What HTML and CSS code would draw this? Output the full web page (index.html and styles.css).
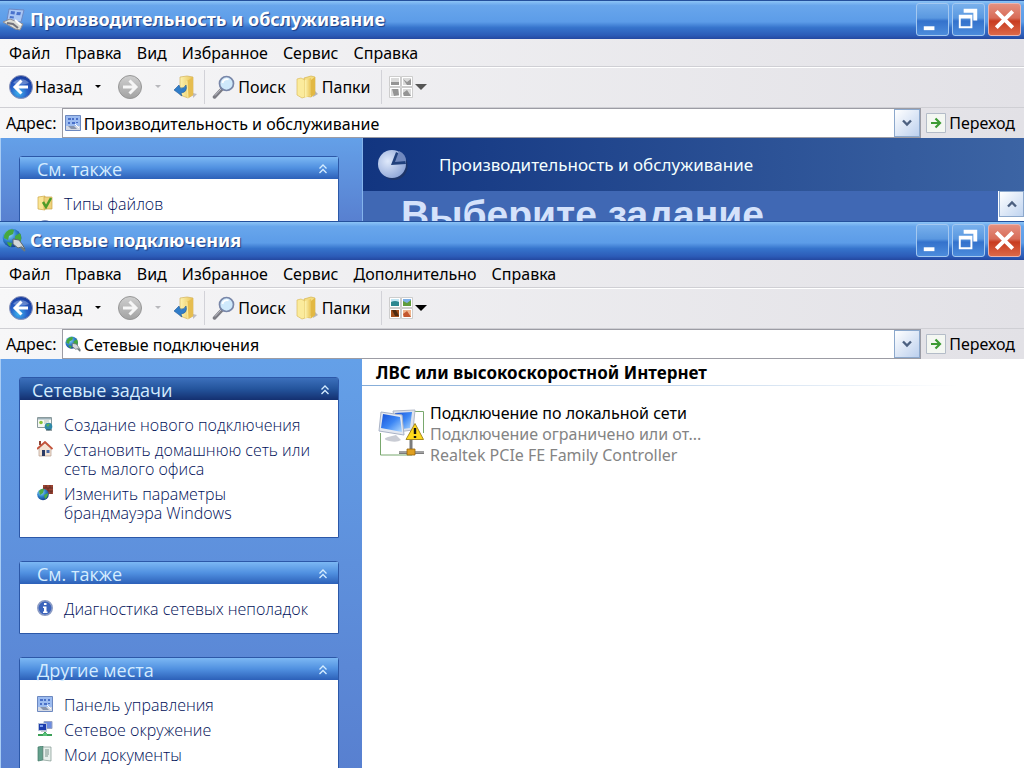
FILE: index.html
```
<!DOCTYPE html>
<html lang="ru">
<head>
  <meta charset="UTF-8">
  <title>Сетевые подключения</title>
  <link rel="stylesheet" href="styles.css">
</head>
<body>

  <svg class="sprite" aria-hidden="true">
    <defs>
      <radialGradient id="gBack" cx="40%" cy="75%" r="75%">
        <stop offset="0" stop-color="#3fb4ee"/><stop offset="0.5" stop-color="#2860c8"/><stop offset="1" stop-color="#173a9c"/>
      </radialGradient>
      <linearGradient id="gGray" x1="0" y1="0" x2="0" y2="1">
        <stop offset="0" stop-color="#cfcfcf"/><stop offset="1" stop-color="#a2a2a2"/>
      </linearGradient>
      <linearGradient id="gFolder" x1="0" y1="0" x2="1" y2="0">
        <stop offset="0" stop-color="#fdf3b0"/><stop offset="1" stop-color="#e9c355"/>
      </linearGradient>
      <linearGradient id="gScreen" x1="0" y1="0" x2="1" y2="1">
        <stop offset="0" stop-color="#1550d8"/><stop offset="0.5" stop-color="#3c86f4"/><stop offset="1" stop-color="#b4dcff"/>
      </linearGradient>
      <radialGradient id="gGlobe" cx="35%" cy="30%" r="75%">
        <stop offset="0" stop-color="#9fe0fb"/><stop offset="0.5" stop-color="#2f84cc"/><stop offset="1" stop-color="#123a86"/>
      </radialGradient>
      <radialGradient id="gPie" cx="35%" cy="40%" r="70%">
        <stop offset="0" stop-color="#dfe9fb"/><stop offset="1" stop-color="#8ca4d6"/>
      </radialGradient>
    </defs>

    <symbol id="back" viewBox="0 0 24 24">
      <circle cx="12" cy="12" r="11.5" fill="url(#gBack)" stroke="#8a93b8"/>
      <path d="M4 8a9 7 0 0 1 16 0q-8 3-16 0z" fill="#fff" opacity=".3"/>
      <path d="M12.500 5.500L6 12l6.500 6.500M6.500 12H19" fill="none" stroke="#fff" stroke-width="3"/>
    </symbol>
    <symbol id="forward" viewBox="0 0 24 24">
      <circle cx="12" cy="12" r="11.500" fill="url(#gGray)" stroke="#979797"/>
      <path d="M11.500 5.500L18 12l-6.500 6.500M5 12h12.500" fill="none" stroke="#f6f6f6" stroke-width="3"/>
    </symbol>
    <symbol id="up" viewBox="0 0 24 24">
      <path d="M20 18l4 1-4 4z" fill="#bcbcc4"/>
      <path d="M7 2l7-1 6 1v18l-5 3-8-3z" fill="url(#gFolder)" stroke="#d2b25c" stroke-width=".7"/>
      <path d="M14 6l6-4v18l-5 3z" fill="#e6bd50"/>
      <path d="M14 6l1 17" stroke="#fdf3b0" stroke-width=".8"/>
      <path d="M1 15l5-5 1 3q4 1 6-3 2 7-5 8l1 3z" fill="#2f7cc8" stroke="#1e5a9c" stroke-width=".6"/>
    </symbol>
    <symbol id="search" viewBox="0 0 24 24">
      <path d="M10 14l-7.500 8" stroke="#7c7c84" stroke-width="3.500" stroke-linecap="round"/>
      <path d="M9 14l-6 6.500" stroke="#c4c4cc" stroke-width="1"/>
      <circle cx="14.500" cy="8.500" r="7" fill="#cfe9fb" stroke="#7886a8" stroke-width="1.700"/>
      <path d="M10.500 8a4.500 4.500 0 0 1 6-3.500" fill="none" stroke="#fff" stroke-width="1.800"/>
    </symbol>
    <symbol id="folders" viewBox="0 0 24 24">
      <path d="M18 15l4 4-5 3z" fill="#b4b4bc"/>
      <path d="M8 3l7-2 4 1v17l-4 3-7-1z" fill="#f4dc80" stroke="#d6b450" stroke-width=".7"/>
      <path d="M1 4l4-1 4 2v17l-3 1-5-3z" fill="#fbeb9c" stroke="#dcbc5c" stroke-width=".7"/>
      <path d="M9 5l6-2v17l-6 3z" fill="url(#gFolder)"/>
      <path d="M15 5l4-3v17l-4 3z" fill="#e2b843"/>
    </symbol>
    <symbol id="views" viewBox="0 0 24 22">
      <g fill="#fff" stroke="#c2c2c2" stroke-width=".8"><path d="M.5.5h11v10H.5zM12.500.5h11v10h-11zM.5 11.500h11v10H.5zM12.500 11.500h11v10h-11z"/></g>
      <path d="M2 2h8v4H2z" fill="#bfe4f2"/><path d="M2 5q4-2 8 0v4H2z" fill="#2c8790"/>
      <path d="M14 2h8v7h-8z" fill="#7db0e6"/><path d="M14 9V4l4 2 4-3v6z" fill="#5f9c3c"/>
      <path d="M2 13h8v7H2z" fill="#a4501c"/><path d="M3 13h4l3 6H6z" fill="#4c2a10"/>
      <path d="M14 13h8v7h-8z" fill="#efb48c"/><path d="M14 17l4-3 4 6h-7z" fill="#c4562e"/>
    </symbol>
    <symbol id="viewsOff" viewBox="0 0 24 22">
      <g fill="#fff" stroke="#c2c2c2" stroke-width=".8"><path d="M.5.5h11v10H.5zM12.500.5h11v10h-11zM.5 11.500h11v10H.5zM12.500 11.500h11v10h-11z"/></g>
      <path d="M2 2h8v7H2zM14 2h8v7h-8zM2 13h8v7H2zM14 13h8v7h-8z" fill="#dadada"/>
      <path d="M2 6h8v3H2zM14 3l4 3 4-3v6h-4zM3 13h6l1 6-5 1zM14 17l4-3 4 6h-7z" fill="#949494"/>
    </symbol>
    <symbol id="go" viewBox="0 0 20 20">
      <path d="M.5.5h19v19H.5z" fill="#f4f7f2" stroke="#b4bcc8"/>
      <path d="M5 10h9M9.500 5.500L14 10l-4.500 4.500" fill="none" stroke="#3d9a34" stroke-width="2.200"/>
    </symbol>
    <symbol id="panel" viewBox="0 0 16 16">
      <path d="M.5.5h15v15H.5z" fill="#9dbcf0" stroke="#6c88c0"/>
      <path d="M3 3h3v2H3zM7 3h2v2H7zM11 3h2v2h-2zM3 7h2v2H3zM7 7h3v2H7zM11 7h2v1h-2z" fill="#4a70c8"/>
      <path d="M1 11h14v4H1z" fill="#d4d9e4"/><path d="M3 11h6l3 3H6z" fill="#8894ac"/><path d="M10 9l4 4" stroke="#fff"/>
    </symbol>
    <symbol id="perf" viewBox="0 0 24 24">
      <path d="M7 2l15 1-3 12-14-2z" fill="#a9c6f4" stroke="#6d88c4"/>
      <path d="M9 4l4 .5-.5 3-4-.5zM15 5l4 .3-.8 3-4-.4zM8 9l4 .5-.4 2-4-.5z" fill="#4a72cc"/>
      <path d="M1 15l7-3 13 5-3 6-5-1z" fill="#dcdcd6" stroke="#8c8c94"/>
      <path d="M5 16l6 1 5 4" stroke="#72727c" stroke-width="2" fill="none"/>
      <path d="M13 13l6 5" stroke="#fff" stroke-width="2"/>
    </symbol>
    <symbol id="globe" viewBox="0 0 24 24">
      <circle cx="10" cy="10" r="9.300" fill="url(#gGlobe)"/>
      <path d="M4 4q4-4 8-2l-1 4-4 2-1 4-4-2q0-4 2-6zM13 8l5-3q3 6-1 11l-4-3zM5 14l5 1-1 4q-3-1-4-5z" fill="#46a83e"/>
      <path d="M11 11l6 1 3 4 3 5-4-2-3 1-5-4z" fill="#d2d6d8" stroke="#5c686c"/>
      <path d="M19 19l4 4" stroke="#6c787c" stroke-width="2"/>
    </symbol>
    <symbol id="pie" viewBox="0 0 32 32">
      <ellipse cx="17" cy="17" rx="13.500" ry="14" fill="#1d3569"/>
      <circle cx="15" cy="15" r="14" fill="url(#gPie)"/>
      <path d="M14 16L19 3q9 3 10 12z" fill="#20407c"/>
      <path d="M18 13l4-11q7 3 7 10z" fill="#7088be"/>
    </symbol>
    <symbol id="types" viewBox="0 0 16 16">
      <path d="M1 2l7-1v14l-7-1z" fill="#fbe695" stroke="#cda848" stroke-width=".7"/>
      <path d="M7 2h8v12H7z" fill="#efd27c" stroke="#cda848" stroke-width=".7"/>
      <path d="M6 7l3 5 5-9" fill="none" stroke="#4f9c28" stroke-width="2.500"/>
    </symbol>
    <symbol id="create" viewBox="0 0 16 16">
      <path d="M.5 1.500h14v10H.5z" fill="#f6f8f4" stroke="#8a9a9c"/><path d="M1 2h13v1.500H1z" fill="#9cb0b8"/>
      <circle cx="4" cy="6.500" r="1.800" fill="#8cc43c"/><path d="M7 5h5M7 7h3" stroke="#b8c0b4"/>
      <circle cx="11.500" cy="10.500" r="3.800" fill="#2f88a8"/><path d="M9 9q2-2 4-1l-2 3z" fill="#57b05a"/><path d="M9 14h6" stroke="#304850"/>
    </symbol>
    <symbol id="home" viewBox="0 0 16 16">
      <path d="M2 7l6-5 6 5v8H2z" fill="#f4e4d4" stroke="#b49c8c" stroke-width=".7"/>
      <path d="M2 0h2v4H2z" fill="#8e4434"/>
      <path d="M0 8l8-7 7.500 7" fill="none" stroke="#c4543c" stroke-width="1.800"/>
      <path d="M5 9h3v6H5z" fill="#2c3c64"/><path d="M9.500 9h3v3h-3z" fill="#4868a4"/>
    </symbol>
    <symbol id="firewall" viewBox="0 0 16 16">
      <path d="M6 0h10v9H6z" fill="#9c4432"/><path d="M6 3h10M6 6h10M9 0v3M13 0v3M11 3v3M9 6v3M14 6v3" stroke="#5c2c24" stroke-width=".8"/>
      <circle cx="6" cy="9.500" r="5.800" fill="url(#gGlobe)"/><path d="M2 6q3-3 5-2L6 8l-3 2zM7 10l4-2q0 4-3 6z" fill="#4cac44"/>
    </symbol>
    <symbol id="info" viewBox="0 0 16 16">
      <circle cx="8" cy="8" r="7.200" fill="#3c64bc" stroke="#8c9cc4" stroke-width="1.600"/>
      <path d="M7 3h2.500v2H7zM6 6.500h3.500v5h1V13H6v-1.500h1V8H6z" fill="#fff"/>
    </symbol>
    <symbol id="network" viewBox="0 0 16 16">
      <path d="M7 .5h8v7H7z" fill="#6c8ce0" stroke="#98a4c4"/><path d="M1.500 2.500h8v7h-8z" fill="#1c3cac" stroke="#b4c0d8"/><path d="M3 4h3v2H3z" fill="#7ca0f0"/>
      <path d="M4 10h6v1H4z" fill="#c8ccd4"/><path d="M8 11v3M1 14h14" stroke="#3ca058" stroke-width="2"/><path d="M6 12h4v3H6z" fill="#58c078"/>
    </symbol>
    <symbol id="docs" viewBox="0 0 16 16">
      <path d="M1 1l5-1v14l-5 1z" fill="#64a08c" stroke="#427868" stroke-width=".7"/>
      <path d="M6 1h8v14l-8-1z" fill="#e8f0ec" stroke="#7c948c" stroke-width=".7"/><path d="M8 4h4M8 6h4M8 8h4M8 10h3" stroke="#7c948c"/>
    </symbol>
    <symbol id="lan" viewBox="0 0 48 48">
      <path d="M2.500 24v22H34M33 2.500h12.500V24" fill="none" stroke="#79a86e"/>
      <path d="M15 2l22-1-2 20-16 2z" fill="#dde2ec" stroke="#b0b8c8"/><path d="M17 4l17-1-2 16-15 2z" fill="url(#gScreen)"/>
      <path d="M10 28l8-2 5 5q-4 3-12 1-8-2-1-4z" fill="#c9ccd4"/>
      <path d="M3 3l21 3 2 20-25-4z" fill="#e4e8f0" stroke="#a8b2c6"/><path d="M5 5l17 3 2 15-21-4z" fill="url(#gScreen)"/>
      <path d="M33 31v12M21 43.500h25" stroke="#7c7c7c" stroke-width="3"/><path d="M21 43h25" stroke="#c6c6c6"/>
      <path d="M29 40h8v6h-8z" fill="#e0a020" stroke="#98640c" stroke-width=".8"/>
      <path d="M37 14.500l8.500 16H28z" fill="#ffd91c" stroke="#a88a20" stroke-linejoin="round"/>
      <path d="M37 19v6M37 27v2" stroke="#111" stroke-width="2.400"/>
    </symbol>
    <symbol id="chevrons" viewBox="0 0 10 10">
      <path d="M1.500 4.500L5 1l3.500 3.500M1.500 9L5 5.500 8.500 9" fill="none" stroke="currentColor" stroke-width="1.300"/>
    </symbol>
    <symbol id="caret" viewBox="0 0 12 8">
      <path d="M2 1.500l4 4 4-4" fill="none" stroke="currentColor" stroke-width="2.400"/>
    </symbol>
    <symbol id="min" viewBox="0 0 32 32"><path d="M7 23h11v4H7z" fill="#fff"/></symbol>
    <symbol id="restore" viewBox="0 0 32 32">
      <path d="M11 5v4h10v8h4V5zM6 11v14h14V11zm2 4h10v8H8z" fill="#fff" fill-rule="evenodd"/>
    </symbol>
    <symbol id="close" viewBox="0 0 32 32"><path d="M7.500 7.500l17 17M24.500 7.500l-17 17" stroke="#fff" stroke-width="4"/></symbol>
  </svg>

  <section class="window window-back">
    <header class="titlebar">
      <svg class="title-icon"><use href="#perf"/></svg>
      <h1>Производительность и обслуживание</h1>
      <button class="win-btn" aria-label="Свернуть"><svg><use href="#min"/></svg></button>
      <button class="win-btn" aria-label="Восстановить"><svg><use href="#restore"/></svg></button>
      <button class="win-btn win-close" aria-label="Закрыть"><svg><use href="#close"/></svg></button>
    </header>
    <nav class="menubar">
      <button>Файл</button>
      <button>Правка</button>
      <button>Вид</button>
      <button>Избранное</button>
      <button>Сервис</button>
      <button>Справка</button>
    </nav>
    <div class="toolbar">
      <button class="tool tool-back"><svg><use href="#back"/></svg>Назад<i class="drop"></i></button>
      <button class="tool tool-forward" aria-label="Вперед" disabled><svg><use href="#forward"/></svg><i class="drop"></i></button>
      <button class="tool tool-up" aria-label="Вверх"><svg><use href="#up"/></svg></button>
      <span class="sep"></span>
      <button class="tool"><svg><use href="#search"/></svg>Поиск</button>
      <button class="tool tool-folders"><svg><use href="#folders"/></svg>Папки</button>
      <span class="sep"></span>
      <button class="tool tool-views off" aria-label="Вид"><svg><use href="#viewsOff"/></svg><i class="drop drop-big"></i></button>
    </div>
    <div class="address">
      <label for="addr1">Адрес:</label>
      <div class="combo">
        <svg><use href="#panel"/></svg>
        <input id="addr1" type="text" value="Производительность и обслуживание">
        <button class="combo-btn" aria-label="Открыть список"><svg><use href="#caret"/></svg></button>
      </div>
      <button class="go"><svg><use href="#go"/></svg>Переход</button>
    </div>
    <div class="content">
      <aside class="sidebar">
        <div class="box">
          <button class="box-head">См. также<svg><use href="#chevrons"/></svg></button>
          <ul>
            <li><svg><use href="#types"/></svg><a href="#">Типы файлов</a></li>
            <li><svg><use href="#info"/></svg></li>
          </ul>
        </div>
      </aside>
      <main class="category">
        <div class="category-head">
          <svg><use href="#pie"/></svg>
          <span>Производительность и обслуживание</span>
        </div>
        <div class="category-body">
          <h2>Выберите задание</h2>
          <div class="scroll"><button aria-label="Вверх"><svg><use href="#caret"/></svg></button></div>
        </div>
      </main>
    </div>
  </section>

  <section class="window window-front">
    <header class="titlebar">
      <svg class="title-icon"><use href="#globe"/></svg>
      <h1>Сетевые подключения</h1>
      <button class="win-btn" aria-label="Свернуть"><svg><use href="#min"/></svg></button>
      <button class="win-btn" aria-label="Восстановить"><svg><use href="#restore"/></svg></button>
      <button class="win-btn win-close" aria-label="Закрыть"><svg><use href="#close"/></svg></button>
    </header>
    <nav class="menubar">
      <button>Файл</button>
      <button>Правка</button>
      <button>Вид</button>
      <button>Избранное</button>
      <button>Сервис</button>
      <button>Дополнительно</button>
      <button>Справка</button>
    </nav>
    <div class="toolbar">
      <button class="tool tool-back"><svg><use href="#back"/></svg>Назад<i class="drop"></i></button>
      <button class="tool tool-forward" aria-label="Вперед" disabled><svg><use href="#forward"/></svg><i class="drop"></i></button>
      <button class="tool tool-up" aria-label="Вверх"><svg><use href="#up"/></svg></button>
      <span class="sep"></span>
      <button class="tool"><svg><use href="#search"/></svg>Поиск</button>
      <button class="tool tool-folders"><svg><use href="#folders"/></svg>Папки</button>
      <span class="sep"></span>
      <button class="tool tool-views" aria-label="Вид"><svg><use href="#views"/></svg><i class="drop drop-big"></i></button>
    </div>
    <div class="address">
      <label for="addr2">Адрес:</label>
      <div class="combo">
        <svg><use href="#globe"/></svg>
        <input id="addr2" type="text" value="Сетевые подключения">
        <button class="combo-btn" aria-label="Открыть список"><svg><use href="#caret"/></svg></button>
      </div>
      <button class="go"><svg><use href="#go"/></svg>Переход</button>
    </div>
    <div class="content">
      <aside class="sidebar">
        <div class="box box-main">
          <button class="box-head">Сетевые задачи<svg><use href="#chevrons"/></svg></button>
          <ul>
            <li><svg><use href="#create"/></svg><a href="#">Создание нового подключения</a></li>
            <li><svg><use href="#home"/></svg><a href="#">Установить домашнюю сеть или<br>сеть малого офиса</a></li>
            <li><svg><use href="#firewall"/></svg><a href="#">Изменить параметры<br>брандмауэра Windows</a></li>
          </ul>
        </div>
        <div class="box">
          <button class="box-head">См. также<svg><use href="#chevrons"/></svg></button>
          <ul>
            <li><svg><use href="#info"/></svg><a href="#">Диагностика сетевых неполадок</a></li>
          </ul>
        </div>
        <div class="box">
          <button class="box-head">Другие места<svg><use href="#chevrons"/></svg></button>
          <ul>
            <li><svg><use href="#panel"/></svg><a href="#">Панель управления</a></li>
            <li><svg><use href="#network"/></svg><a href="#">Сетевое окружение</a></li>
            <li><svg><use href="#docs"/></svg><a href="#">Мои документы</a></li>
          </ul>
        </div>
      </aside>
      <main class="list">
        <h2>ЛВС или высокоскоростной Интернет</h2>
        <div class="connection">
          <svg><use href="#lan"/></svg>
          <div>
            <p>Подключение по локальной сети</p>
            <p class="muted">Подключение ограничено или от...</p>
            <p class="muted">Realtek PCIe FE Family Controller</p>
          </div>
        </div>
      </main>
    </div>
  </section>

</body>
</html>
```
FILE: styles.css
```
* {
  box-sizing: border-box;
}
body {
  margin: 0;
  height: 100vh;
  display: flex;
  flex-direction: column;
  overflow: hidden;
  font-family: "Noto Sans", "Open Sans", sans-serif;
  font-size: 16px;
  line-height: 20px;
  color: #000;
}
h1, h2, p, ul {
  margin: 0;
  padding: 0;
}
button, input {
  font: inherit;
  color: inherit;
  background: none;
  border: 0;
  padding: 0;
}
svg {
  display: block;
  flex: none;
}
.sprite {
  position: absolute;
  width: 0;
  height: 0;
}

/* windows */
.window {
  display: flex;
  flex-direction: column;
  overflow: hidden;
  background: linear-gradient(to right, #f7f7f8, #e2e1e6);
}
.window-back {
  flex: 0 0 221px;
}
.window-front {
  flex: 1;
}
.titlebar {
  flex: none;
  height: 39px;
  display: flex;
  align-items: center;
  gap: 3px;
  padding: 0 3px 2px 2px;
  border-top: 1px solid #24509c;
  background: linear-gradient(#8cc4f6 0, #68a6ec 12%, #5c9ce8 55%, #3674cc 70%, #2c5cb8 90%, #2448a0 100%);
}
.title-icon {
  width: 24px;
  height: 24px;
}
.titlebar h1 {
  flex: 1;
  padding-left: 1px;
  font-size: 18px;
  color: #fff;
  text-shadow: 1px 1px 1px #1c3c84;
}
.win-btn {
  width: 33px;
  height: 33px;
  border: 1px solid #a4c8f0;
  border-radius: 3px;
  background: linear-gradient(#78b0ec, #5a98e0 45%, #3472cc 55%, #4c8cdc);
}
.win-btn svg {
  width: 31px;
  height: 31px;
}
.win-close {
  border-color: #eab4b0;
  background: linear-gradient(#e49080, #d86c58 45%, #c83c20 55%, #dc6848);
}
.menubar {
  flex: none;
  height: 28px;
  display: flex;
  align-items: center;
  gap: 15px;
  padding-left: 9px;
  border-bottom: 1px solid #cfcfd4;
}
.toolbar {
  flex: none;
  height: 41px;
  display: flex;
  align-items: center;
  padding: 0 0 2px 9px;
  border-top: 1px solid #fff;
  border-bottom: 1px solid #cfcfd4;
}
.tool {
  display: flex;
  align-items: center;
  gap: 2px;
}
.tool svg {
  width: 24px;
  height: 24px;
}
.tool-forward {
  margin-left: 17px;
}
.drop {
  border: 3px solid transparent;
  border-top-color: #000;
  border-bottom: 0;
  margin-left: 11px;
}
.tool-forward .drop {
  border-top-color: #b8b8bc;
}
.tool-up {
  margin-left: 12px;
}
.sep {
  width: 1px;
  height: 34px;
  margin: 0 7px;
  background: #d2d2d8;
}
.tool-folders {
  margin-left: 10px;
}
.tool-folders + .sep {
  margin-left: 10px;
}
.tool-views svg {
  height: 22px;
}
.drop-big {
  border-width: 6px;
  border-bottom: 0;
  margin-left: 0;
}
.off .drop-big {
  border-top-color: #555;
}
.address {
  flex: none;
  height: 30px;
  display: flex;
  align-items: center;
  gap: 5px;
  padding: 0 9px 0 6px;
}
.combo {
  flex: 1;
  align-self: stretch;
  display: flex;
  align-items: center;
  gap: 3px;
  padding-left: 2px;
  border: 1px solid #9c9ca4;
  background: #fff;
}
.combo > svg {
  width: 16px;
  height: 16px;
}
.combo input {
  flex: 1;
  min-width: 0;
  padding-top: 2px;
}
.combo-btn {
  width: 26px;
  align-self: stretch;
  display: flex;
  align-items: center;
  justify-content: center;
  border: 1px solid #8ca8cc;
  background: linear-gradient(135deg, #fff, #bcd0ee);
  color: #4c6080;
}
.combo-btn svg {
  width: 12px;
  height: 8px;
}
.go {
  display: flex;
  align-items: center;
  gap: 3px;
}
.go svg {
  width: 20px;
  height: 20px;
}

/* content */
.content {
  flex: 1;
  min-height: 0;
  display: flex;
}
.sidebar {
  flex: 0 0 362px;
  display: flex;
  flex-direction: column;
  gap: 23px;
  padding: 18px 23px 0 18px;
  border-left: 1px solid #a8ccf4;
  background: linear-gradient(#64a0e8, #5880d0);
  overflow: hidden;
}
.box {
  flex: none;
  border: 1px solid #2c58a8;
  border-radius: 3px 3px 0 0;
  background: #fff;
  font-family: "Open Sans", "Noto Sans", sans-serif;
  font-weight: 300;
}
.box-head {
  width: 100%;
  height: 22px;
  display: flex;
  align-items: center;
  justify-content: space-between;
  padding: 2px 10px 0 17px;
  background: linear-gradient(#7cb8f4, #5090e0 50%, #2c60b8);
  color: #d4ecff;
  font-size: 18px;
  font-weight: 400;
}
.box-main .box-head {
  padding: 2px 8px 0 12px;
  background: linear-gradient(#3c70bc, #24549c 50%, #143070);
}
.box-head svg {
  width: 10px;
  height: 10px;
}
.box ul {
  display: flex;
  flex-direction: column;
  gap: 6px;
  padding: 16px 17px 14px;
  list-style: none;
}
.box li {
  display: flex;
  gap: 11px;
  line-height: 19px;
}
.box li svg {
  width: 16px;
  height: 16px;
}
.box a {
  color: #001058;
  text-decoration: none;
}
.category {
  flex: 1;
  display: flex;
  flex-direction: column;
  border-left: 1px solid #84b4ec;
  background: #4068b4;
}
.category-head {
  flex: none;
  height: 53px;
  display: flex;
  align-items: center;
  gap: 30px;
  padding-left: 14px;
  background: linear-gradient(to right, #123580, #3c64a4);
  color: #f4ffff;
  font-size: 17px;
}
.category-head svg {
  width: 32px;
  height: 32px;
}
.category-body {
  display: flex;
  justify-content: space-between;
  padding-left: 38px;
}
.category h2 {
  font: bold 39px/48px "Liberation Sans", sans-serif;
  color: #d4e2fb;
}
.scroll {
  width: 26px;
  padding-left: 1px;
  background: #fff;
}
.scroll button {
  width: 25px;
  height: 26px;
  display: flex;
  align-items: center;
  justify-content: center;
  border: 1px solid #8ca8cc;
  background: linear-gradient(135deg, #fff, #c0d4f0);
  color: #4c6080;
}
.scroll svg {
  width: 12px;
  height: 8px;
  transform: rotate(180deg);
}
.list {
  flex: 1;
  background: #fff;
}
.list h2 {
  height: 27px;
  padding: 4px 14px 0;
  font-size: 17px;
  border-bottom: 1px solid;
  border-image: linear-gradient(to right, #84acd8, #fff 90%) 1;
}
.connection {
  display: flex;
  gap: 4px;
  padding: 17px 16px;
  line-height: 21px;
}
.connection svg {
  width: 48px;
  height: 48px;
  margin-top: 6px;
}
.muted {
  color: #848484;
}
```
